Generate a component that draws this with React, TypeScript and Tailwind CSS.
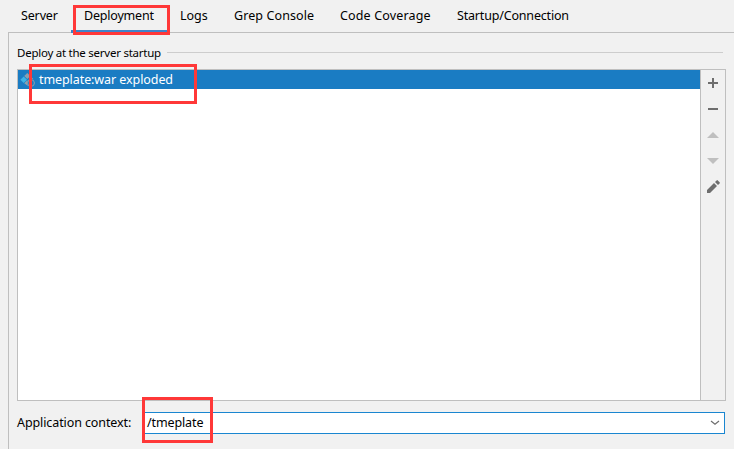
import React from "react";

const tabs = [
  { label: "Server", width: "w-[63px]", spacing: "tracking-[-0.15px]" },
  { label: "Deployment", width: "w-[96px]", spacing: "tracking-[-0.2px]" },
  { label: "Logs", width: "w-[54px]", spacing: "tracking-[0px]" },
  { label: "Grep Console", width: "w-[106px]", spacing: "tracking-[0.1px]" },
  { label: "Code Coverage", width: "w-[117px]", spacing: "tracking-[0.15px]" },
  { label: "Startup/Connection", width: "w-[140px]", spacing: "tracking-[-0.18px]" },
];

function Tabs() {
  return (
    <div className="flex h-8 pl-2">
      {tabs.map((t) => (
        <div
          key={t.label}
          className={`relative h-8 shrink-0 whitespace-nowrap pl-[13px] leading-8 ${t.width} ${t.spacing}`}
        >
          {t.label}
          {t.label === "Deployment" && (
            <>
              <div className="absolute bottom-[-1px] left-0 h-[3px] w-full bg-[#4083c9]" />
              <div className="absolute left-[2px] top-[5px] z-10 h-[30px] w-[97px] border-[3px] border-[#ff3838]" />
            </>
          )}
        </div>
      ))}
    </div>
  );
}

function ArtifactIcon() {
  return (
    <svg className="ml-[2px] h-4 w-4 shrink-0" viewBox="0 0 16 16">
      <path d="M7.3 1L10.4 4L7.3 7L4.2 4Z" fill="#8ba0ae" />
      <path d="M3.7 4.6L7 7.8L3.7 11L0.4 7.8Z" fill="#3fb4e6" />
      <path d="M11 4.7L13.6 7.2Q10.5 6.3 8.3 7.5Z" fill="#8ba0ae" />
      <path d="M7.2 8.3L7.8 9Q6.4 11.4 8 14L4.2 11.3Z" fill="#8ba0ae" />
      <circle cx="11" cy="11" r="3.4" fill="none" stroke="#8ba0ae" />
      <path d="M8.7 9Q11.7 10.5 11.2 14.2" fill="none" stroke="#8ba0ae" />
    </svg>
  );
}

function Toolbar() {
  return (
    <div className="flex w-6 flex-col items-center bg-[#f1f1f1]">
      <svg className="h-[130px] w-6" viewBox="0 0 24 130">
        <path d="M7 12H17V14H7ZM11 8H13V18H11ZM7 38H17V40H7Z" fill="#6e6e6e" />
        <path d="M6 68L12 62L18 68Z" fill="#bfbfbf" />
        <path d="M6 88L12 94L18 88Z" fill="#bfbfbf" />
        <path d="M6 120V123H9L16 116L13 113ZM14 112L17 115L18.6 113.4Q19.2 112.8 18.6 112.2L16.8 110.4Q16.2 109.8 15.6 110.4Z" fill="#6e6e6e" />
      </svg>
    </div>
  );
}

export default function App() {
  return (
    <div className="h-[449px] w-[734px] overflow-hidden bg-[#f1f1f1] font-['Noto_Sans','Open_Sans',sans-serif] text-[12.5px] text-black">
      <Tabs />
      <div className="ml-2 h-[417px] border-l border-t border-[#bfbfbf] pl-2">
        <div className="flex h-9 items-start pt-[10px]">
          <span className="w-[150px] whitespace-nowrap text-[11.5px] leading-5 tracking-[-0.25px]">
            Deploy at the server startup
          </span>
          <div className="mt-[9px] h-px w-[556px] bg-[#cdcdcd]" />
        </div>
        <div className="relative flex h-[332px] w-[709px] border border-[#bfbfbf]">
          <div className="flex-1 border-r border-[#bfbfbf] bg-white">
            <div className="flex h-[19px] items-center bg-[#1a7cc3] text-white">
              <ArtifactIcon />
              <span className="ml-[3px] whitespace-nowrap pt-[2px] tracking-[-0.08px]">tmeplate:war exploded</span>
            </div>
          </div>
          <Toolbar />
          <div className="absolute left-[11px] top-[-6px] h-[40px] w-[168px] border-[3px] border-[#ff3838]" />
        </div>
        <div className="relative mt-[11px] flex h-[22px] items-center">
          <span className="w-[126px] whitespace-nowrap tracking-[-0.1px]">Application context:</span>
          <div className="flex h-[22px] w-[582px] items-center justify-between border border-[#1a86d0] bg-white pl-[3px] pr-[4px]">
            <span className="tracking-[-0.12px]">/tmeplate</span>
            <svg className="h-[6px] w-[10px]" viewBox="0 0 10 6">
              <path d="M1 1L5 4.3L9 1" fill="none" stroke="#6e6e6e" strokeWidth="1.2" />
            </svg>
          </div>
          <div className="absolute left-[125px] top-[-15px] h-[46px] w-[71px] border-[3px] border-[#ff3838]" />
        </div>
      </div>
    </div>
  );
}
